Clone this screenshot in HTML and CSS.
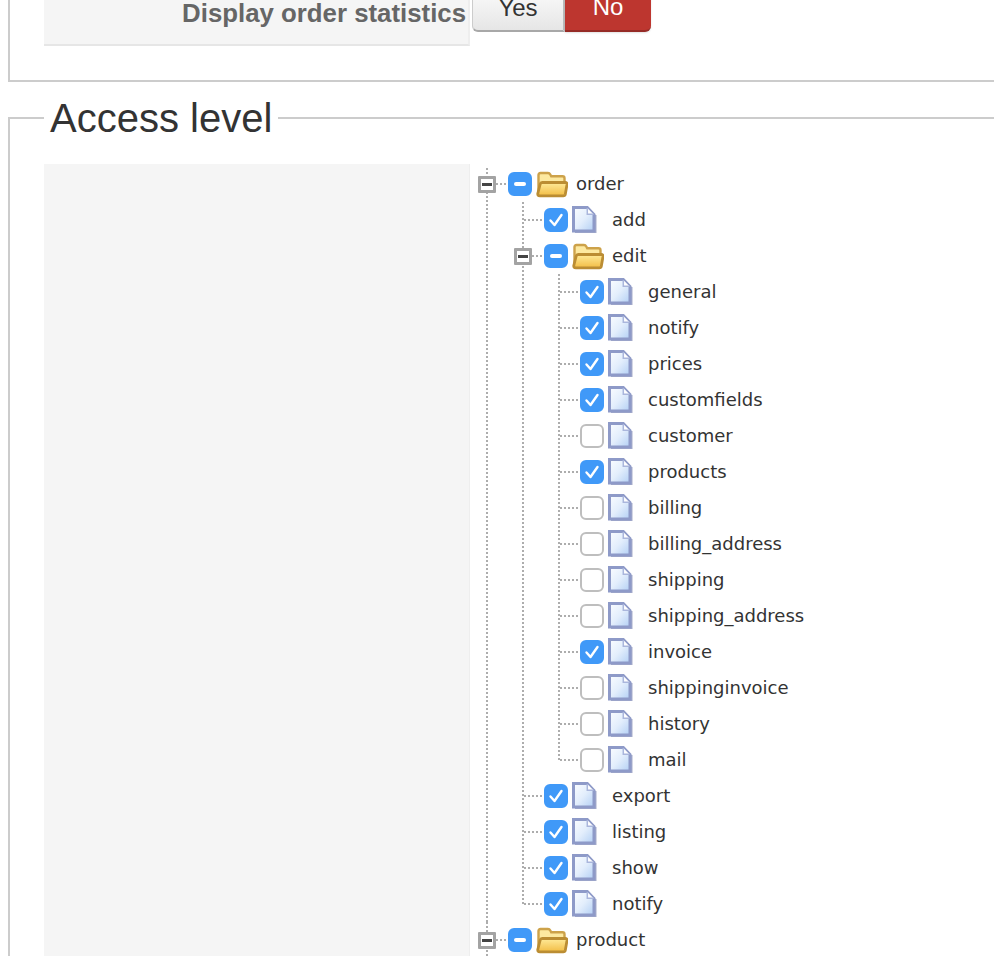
FILE: index.html
```html
<!DOCTYPE html>
<html lang="en">
<head>
<meta charset="utf-8">
<title>Access level</title>
<link rel="stylesheet" href="styles.css">
</head>
<body>
<svg class="defs" width="0" height="0" aria-hidden="true">
  <defs>
    <linearGradient id="docfill" x1="0" y1="0" x2="1" y2="1">
      <stop offset="0" stop-color="#fbfdff"/><stop offset="0.5" stop-color="#e3eefc"/><stop offset="1" stop-color="#b2cff4"/>
    </linearGradient>
    <linearGradient id="foldfill" x1="0" y1="0" x2="0" y2="1">
      <stop offset="0" stop-color="#ffeb9a"/><stop offset="1" stop-color="#f2bd45"/>
    </linearGradient>
    <symbol id="doc" viewBox="0 0 32 28">
      <path d="M3 26h20.500v-17" fill="none" stroke="#5f6aa0" stroke-width="2" opacity=".55"/>
      <path d="M1.500 1.500h13.800l6.700 7v16.500h-20.500z" fill="url(#docfill)" stroke="#8e9ac8" stroke-width="3"/>
      <path d="M15.300 2v6.300h6.200" fill="#fff" stroke="#aab6dc" stroke-width="1.500"/>
    </symbol>
    <symbol id="folder" viewBox="0 0 32 28">
      <path d="M2.500 20v-15q0-2 2-2h7.500q1.500 0 2.300 1.500l.9 1.700h11.300q2 0 2 2v12z" fill="#fde9a0" stroke="#cda24a" stroke-width="2.400"/>
      <path d="M1.800 23.500l2.400-9.500q.4-1.500 2-1.500h23q2.100 0 1.800 2l-1.700 9.800q-.3 1.500-2 1.500h-23.500q-2.300 0-2-2.300z" fill="url(#foldfill)" stroke="#bb8d33" stroke-width="2.800"/>
    </symbol>
    <symbol id="tick" viewBox="0 0 24 24">
      <path d="M6.500 12.500l4 4.500 7-10" fill="none" stroke="#fff" stroke-width="2.400" stroke-linecap="round" stroke-linejoin="round"/>
    </symbol>
  </defs>
</svg>

<main class="page">
  <section class="panel">
    <div class="form-row">
      <div class="form-label">Display order statistics</div>
      <div class="switch">
        <span class="btn btn-yes">Yes</span>
        <span class="btn btn-no">No</span>
      </div>
    </div>
  </section>

  <fieldset class="access">
    <legend class="access-title">Access level</legend>
    <div class="access-row">
      <div class="access-label"></div>
      <ul class="tree tree-root">
        <li class="node">
          <div class="row"><span class="toggle"><span class="box"></span></span><span class="check partial"></span><svg class="icon"><use href="#folder"/></svg><span class="name">order</span></div>
          <ul class="tree">
            <li class="node"><div class="row"><span class="toggle"></span><span class="check on"><svg class="tick"><use href="#tick"/></svg></span><svg class="icon"><use href="#doc"/></svg><span class="name">add</span></div></li>
            <li class="node">
              <div class="row"><span class="toggle"><span class="box"></span></span><span class="check partial"></span><svg class="icon"><use href="#folder"/></svg><span class="name">edit</span></div>
              <ul class="tree">
                <li class="node"><div class="row"><span class="toggle"></span><span class="check on"><svg class="tick"><use href="#tick"/></svg></span><svg class="icon"><use href="#doc"/></svg><span class="name">general</span></div></li>
                <li class="node"><div class="row"><span class="toggle"></span><span class="check on"><svg class="tick"><use href="#tick"/></svg></span><svg class="icon"><use href="#doc"/></svg><span class="name">notify</span></div></li>
                <li class="node"><div class="row"><span class="toggle"></span><span class="check on"><svg class="tick"><use href="#tick"/></svg></span><svg class="icon"><use href="#doc"/></svg><span class="name">prices</span></div></li>
                <li class="node"><div class="row"><span class="toggle"></span><span class="check on"><svg class="tick"><use href="#tick"/></svg></span><svg class="icon"><use href="#doc"/></svg><span class="name">customfields</span></div></li>
                <li class="node"><div class="row"><span class="toggle"></span><span class="check"></span><svg class="icon"><use href="#doc"/></svg><span class="name">customer</span></div></li>
                <li class="node"><div class="row"><span class="toggle"></span><span class="check on"><svg class="tick"><use href="#tick"/></svg></span><svg class="icon"><use href="#doc"/></svg><span class="name">products</span></div></li>
                <li class="node"><div class="row"><span class="toggle"></span><span class="check"></span><svg class="icon"><use href="#doc"/></svg><span class="name">billing</span></div></li>
                <li class="node"><div class="row"><span class="toggle"></span><span class="check"></span><svg class="icon"><use href="#doc"/></svg><span class="name">billing_address</span></div></li>
                <li class="node"><div class="row"><span class="toggle"></span><span class="check"></span><svg class="icon"><use href="#doc"/></svg><span class="name">shipping</span></div></li>
                <li class="node"><div class="row"><span class="toggle"></span><span class="check"></span><svg class="icon"><use href="#doc"/></svg><span class="name">shipping_address</span></div></li>
                <li class="node"><div class="row"><span class="toggle"></span><span class="check on"><svg class="tick"><use href="#tick"/></svg></span><svg class="icon"><use href="#doc"/></svg><span class="name">invoice</span></div></li>
                <li class="node"><div class="row"><span class="toggle"></span><span class="check"></span><svg class="icon"><use href="#doc"/></svg><span class="name">shippinginvoice</span></div></li>
                <li class="node"><div class="row"><span class="toggle"></span><span class="check"></span><svg class="icon"><use href="#doc"/></svg><span class="name">history</span></div></li>
                <li class="node last"><div class="row"><span class="toggle"></span><span class="check"></span><svg class="icon"><use href="#doc"/></svg><span class="name">mail</span></div></li>
              </ul>
            </li>
            <li class="node"><div class="row"><span class="toggle"></span><span class="check on"><svg class="tick"><use href="#tick"/></svg></span><svg class="icon"><use href="#doc"/></svg><span class="name">export</span></div></li>
            <li class="node"><div class="row"><span class="toggle"></span><span class="check on"><svg class="tick"><use href="#tick"/></svg></span><svg class="icon"><use href="#doc"/></svg><span class="name">listing</span></div></li>
            <li class="node"><div class="row"><span class="toggle"></span><span class="check on"><svg class="tick"><use href="#tick"/></svg></span><svg class="icon"><use href="#doc"/></svg><span class="name">show</span></div></li>
            <li class="node last"><div class="row"><span class="toggle"></span><span class="check on"><svg class="tick"><use href="#tick"/></svg></span><svg class="icon"><use href="#doc"/></svg><span class="name">notify</span></div></li>
          </ul>
        </li>
        <li class="node">
          <div class="row"><span class="toggle"><span class="box"></span></span><span class="check partial"></span><svg class="icon"><use href="#folder"/></svg><span class="name">product</span></div>
        </li>
      </ul>
    </div>
  </fieldset>
</main>
</body>
</html>
```

FILE: styles.css
```css
* { box-sizing: border-box; }
html, body {
  margin: 0;
  height: 956px;
  overflow: hidden;
  background: #fff;
}
.defs { position: absolute; }
.page {
  width: 1200px;
  margin-top: -20px;
  padding-left: 8px;
  font-family: "Liberation Sans", Arial, sans-serif;
  color: #333;
}
.panel {
  height: 102px;
  border: 2px solid #ccc;
  border-top: 0;
  padding-left: 34px;
}
.form-row { display: flex; height: 66px; }
.form-label {
  width: 426px;
  height: 66px;
  padding: 15px 2px 0 0;
  background: #f5f5f5;
  border-right: 2px solid #eee;
  border-bottom: 2px solid #e6e6e6;
  color: #666;
  font-size: 25.800px;
  font-weight: 700;
  line-height: 36px;
  text-align: right;
}
.switch { display: flex; height: 52px; margin-left: 2px; }
.btn {
  display: block;
  padding-top: 11px;
  font-size: 24px;
  line-height: 32px;
  text-align: center;
}
.btn-yes {
  width: 93px;
  color: #333;
  background: linear-gradient(#fff, #e6e6e6);
  border: 1px solid #ccc;
  border-bottom: 2px solid #a8a8a8;
  border-right: 2px solid #bbb;
  border-radius: 0 0 0 6px;
}
.btn-no {
  width: 86px;
  color: #fff;
  background: #bd362f;
  border-bottom: 2px solid #962b26;
  border-radius: 0 0 6px 0;
  box-shadow: 0 1px 2px rgba(0, 0, 0, .12);
}
.access {
  margin: 15px 0 0;
  padding: 0 0 0 34px;
  min-width: 0;
  border: 2px solid #ccc;
  border-bottom: 0;
  height: 900px;
}
.access-title {
  padding: 0 6px;
  font-size: 40px;
  line-height: 42px;
  color: #333;
}
.access-row { display: flex; margin-top: 25px; }
.access-label {
  width: 426px;
  background: #f5f5f5;
  border-right: 1px solid #eee;
  height: 820px;
  flex: none;
}
.tree {
  list-style: none;
  margin: 0;
  padding: 0 0 0 36px;
}
.tree-root { padding: 2px 0 0 0; margin-left: -1px; }
.node { position: relative; }
.node::before {
  content: "";
  position: absolute;
  left: 17px;
  top: 0;
  bottom: 0;
  width: 2px;
  background: repeating-linear-gradient(#adadad 0 2px, transparent 2px 4px);
}
.tree-root > .node:first-child::before { top: 2px; }
.node.last::before { bottom: 17px; }
.row {
  position: relative;
  display: flex;
  align-items: center;
  height: 36px;
  font-family: "DejaVu Sans", Verdana, sans-serif;
  font-size: 18px;
  color: #333;
}
.toggle {
  position: relative;
  flex: none;
  width: 36px;
  height: 36px;
}
.toggle::after {
  content: "";
  position: absolute;
  left: 19px;
  width: 20px;
  top: 17px;
  height: 2px;
  background: repeating-linear-gradient(90deg, #adadad 0 2px, transparent 2px 4px);
}
.box {
  position: absolute;
  z-index: 1;
  left: 9px;
  top: 10px;
  width: 18px;
  height: 17px;
  background: #fff;
  border: 3px solid #a3a3a3;
  border-radius: 1px;
}
.box::after {
  content: "";
  position: absolute;
  left: 1px;
  top: 4px;
  width: 10px;
  height: 3px;
  background: #444;
}
.check {
  position: relative;
  z-index: 1;
  flex: none;
  width: 24px;
  height: 24px;
  margin-left: 3px;
  background: #fff;
  border: 2px solid #bebebe;
  border-radius: 6px;
}
.check.on, .check.partial {
  background: #4099f8;
  border-color: #4099f8;
}
.check.partial::after {
  content: "";
  position: absolute;
  left: 4px;
  top: 8px;
  width: 12px;
  height: 4px;
  border-radius: 2px;
  background: #fff;
}
.tick {
  position: absolute;
  left: -2px;
  top: -2px;
  width: 24px;
  height: 24px;
}
.icon {
  flex: none;
  width: 32px;
  height: 28px;
  margin-left: 4px;
  filter: blur(.3px);
}
.name { margin: -2px 0 0 8px; white-space: nowrap; }
```
